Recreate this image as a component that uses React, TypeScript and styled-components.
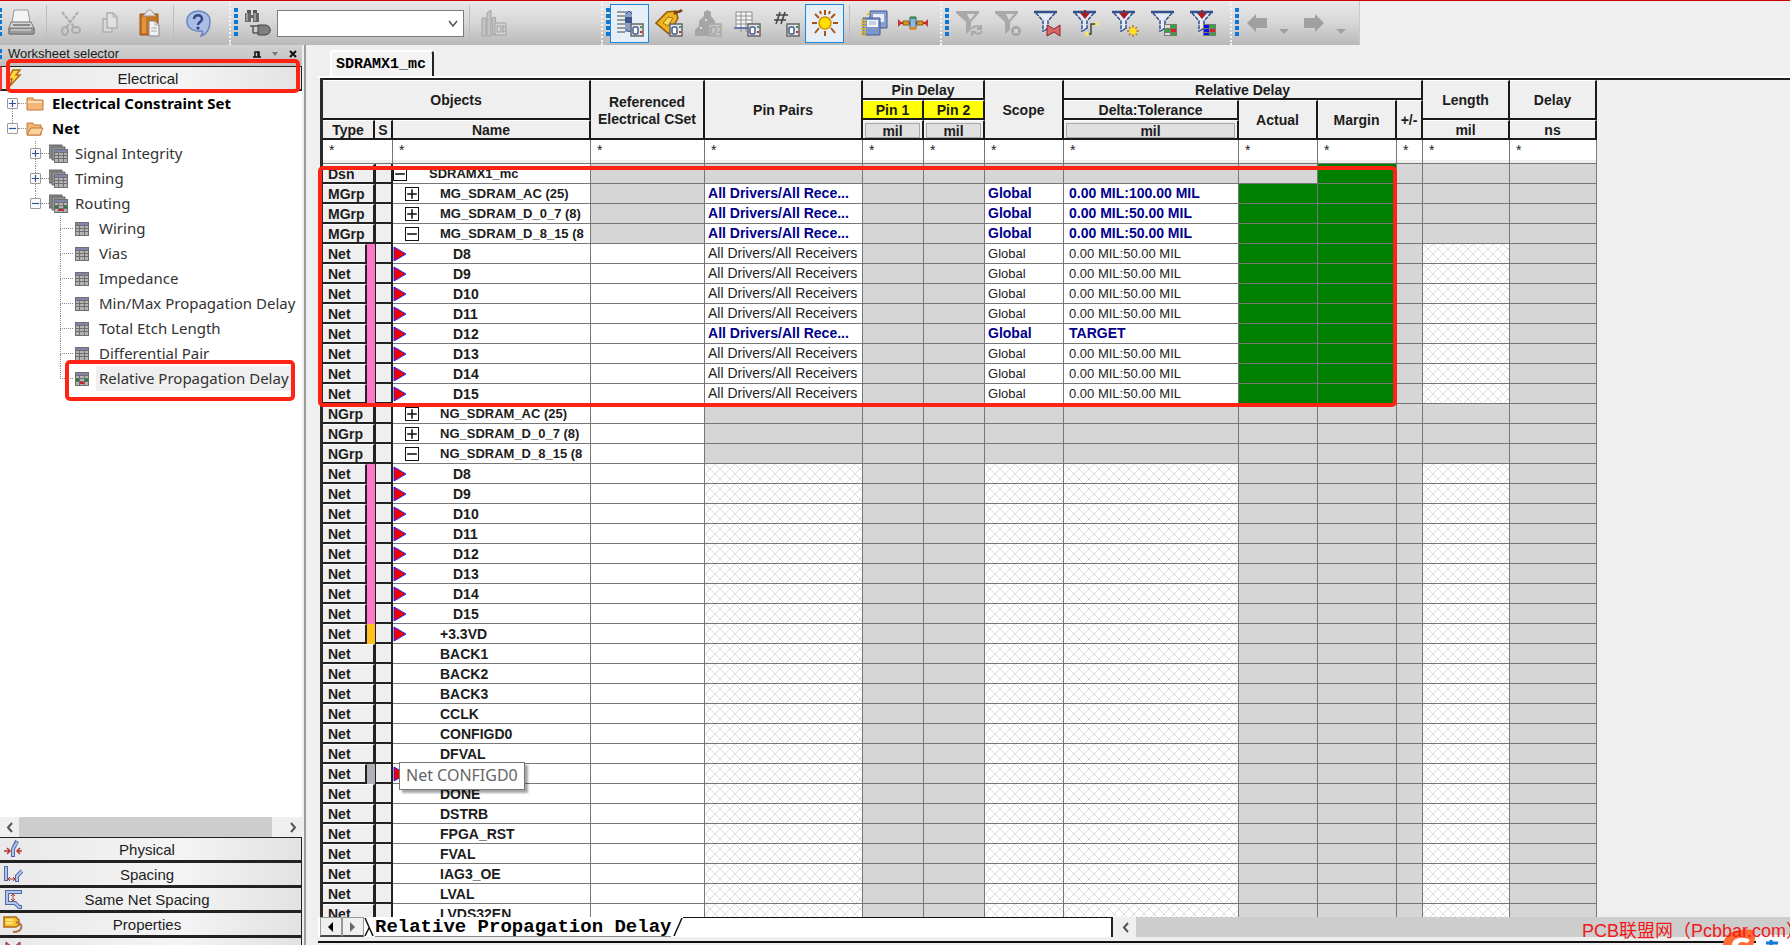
import React from "react";
import styled, { createGlobalStyle, css } from "styled-components";

const GlobalStyle = createGlobalStyle`
  *, *::before, *::after { box-sizing: border-box; }
  html, body, #root { height: 100%; }
  body {
    margin: 0;
    background: #efefef;
    color: #1c1c1c;
    font-family: "Liberation Sans", Arial, sans-serif;
    font-size: 14px;
    overflow: hidden;
  }
  button, input, select { font: inherit; color: inherit; margin: 0; padding: 0; border: 0; background: none; border-radius: 0; }
  svg { display: block; flex: none; }
`;

const Shell = styled.div`
  height: 100vh;
  display: flex;
  flex-direction: column;
  position: relative;
  overflow: hidden;
`;

/* ---------- toolbar ---------- */

const ToolbarRow = styled.header`
  flex: none;
  display: flex;
  height: 45px;
  border-top: 1px solid #c80000;
`;

const ToolGroup = styled.div<{ $width: number }>`
  flex: none;
  display: flex;
  align-items: center;
  width: ${(p) => p.$width}px;
  padding-left: 3px;
  background: linear-gradient(#e9e9e9, #d6d6d6 50%, #b9b9b9);
  border-left: 2px dotted #f4f4f4;
  &:first-child { padding-left: 0; border-left: 0; }
  &:last-child { border-right: 1px solid #c9c9c9; }
`;

const Grip = styled.span<{ $width?: number; $height?: number }>`
  flex: none;
  width: ${(p) => p.$width ?? 4}px;
  height: ${(p) => p.$height ?? 30}px;
  background: repeating-linear-gradient(#0a78d8 0 4px, transparent 4px 6px);
`;

const Separator = styled.span`
  flex: none;
  width: 10px;
  height: 36px;
  background: linear-gradient(#bdbdbd, #bdbdbd) center / 1px 100% no-repeat;
`;

const ToolButton = styled.button<{ $active?: boolean }>`
  flex: none;
  display: flex;
  align-items: center;
  justify-content: center;
  width: 39px;
  height: 39px;
  ${(p) => p.$active && css`
    background: #e6eef7;
    border: 1px solid #1a86dc;
  `}
`;

const HistoryButton = styled.button`
  flex: none;
  display: flex;
  align-items: center;
  justify-content: center;
  width: 57px;
  height: 39px;
`;

const ComboWrap = styled.label`
  flex: none;
  display: flex;
  align-items: center;
  position: relative;
  width: 187px;
  height: 27px;
  background: #fff;
  border: 1px solid #7c7c7c;
  svg { position: absolute; right: 5px; pointer-events: none; }
`;

const Combo = styled.select`
  width: 100%;
  height: 100%;
  appearance: none;
`;

/* ---------- left panel ---------- */

const Body = styled.div`
  flex: 1;
  min-height: 0;
  display: flex;
`;

const SidePanel = styled.aside`
  flex: none;
  display: flex;
  flex-direction: column;
  position: relative;
  width: 306px;
  padding-right: 2px;
  border-right: 2px solid #9b9b9b;
  background: #efefef;
`;

const PanelTitle = styled.div`
  flex: none;
  display: flex;
  align-items: center;
  height: 21px;
  padding-bottom: 4px;
  font-size: 13px;
  background: linear-gradient(#d2d2d2, #bfbfbf);
`;

const TitleText = styled.span`
  flex: 1;
  padding-left: 6px;
`;

const TitleButton = styled.button`
  display: flex;
  align-items: center;
  justify-content: center;
  width: 18px;
  height: 20px;
`;

const DomainButton = styled.button<{ $selected?: boolean }>`
  flex: none;
  display: flex;
  align-items: center;
  width: 100%;
  height: 25px;
  padding: 0 8px 0 3px;
  font-size: 15px;
  background: linear-gradient(90deg, #e9e9e9, #f4f4f4 60%, #e2e2e2);
  border: 1px solid #222;
  border-left: 0;
  border-bottom-width: 2px;
  ${(p) => p.$selected && css`border-left: 2px solid #f33;`}
`;

const DomainIcon = styled.span`
  width: 20px;
  flex: none;
`;

const DomainLabel = styled.span`
  flex: 1;
  padding-right: 22px;
  text-align: center;
`;

const Tree = styled.nav`
  flex: 1;
  min-height: 0;
  overflow: hidden;
  background: #fff;
`;

const TreeRow = styled.div<{ $indent: number }>`
  display: flex;
  align-items: center;
  height: 25px;
  padding-left: ${(p) => p.$indent}px;
`;

const ToggleColumn = styled.span`
  flex: none;
  display: flex;
  flex-direction: column;
  align-items: center;
  width: 11px;
  height: 25px;
`;

const VLine = styled.span<{ $on?: boolean }>`
  flex: 1;
  border-left: 1px dotted ${(p) => (p.$on ? "#8a8a8a" : "transparent")};
`;

const Toggle = styled.button`
  width: 11px;
  height: 11px;
  background: #fbfbfb;
  border: 1px solid #9a9a9a;
  border-radius: 1px;
`;

const HLine = styled.span`
  flex: none;
  width: 8px;
  border-top: 1px dotted #8a8a8a;
`;

const Branch = styled.span`
  flex: none;
  display: flex;
  flex-direction: column;
  width: 13px;
  height: 25px;
  margin-right: 2px;
`;

const BranchTop = styled.span`
  height: 13px;
  border-left: 1px dotted #8a8a8a;
  border-bottom: 1px dotted #8a8a8a;
`;

const TreeLabel = styled.a<{ $bold?: boolean; $current?: boolean }>`
  height: 25px;
  padding: 0 3px;
  line-height: 24px;
  font-family: "Noto Sans", "Open Sans", sans-serif;
  font-size: 15px;
  font-weight: ${(p) => (p.$bold ? 700 : 400)};
  color: ${(p) => (p.$bold ? "#000" : "#333")};
  background: ${(p) => (p.$current ? "#efefef" : "none")};
  text-decoration: none;
  white-space: nowrap;
`;

const TreeIcon = styled.span<{ $width: number; $gap: number }>`
  flex: none;
  width: ${(p) => p.$width}px;
  margin-right: ${(p) => p.$gap}px;
`;

const ScrollBar = styled.div`
  display: flex;
  align-items: center;
  background: #efefef;
`;

const PanelScroll = styled(ScrollBar)`
  flex: none;
  height: 20px;
`;

const ScrollArrow = styled.button<{ $width: number }>`
  flex: none;
  display: flex;
  align-items: center;
  justify-content: center;
  width: ${(p) => p.$width}px;
  height: 19px;
`;

const Thumb = styled.span`
  flex: 1;
  align-self: stretch;
  background: #cdcdcd;
`;

const ScrollRest = styled.span`
  flex: none;
  width: 11px;
`;

const DomainList = styled.div`
  flex: none;
  height: 108px;
  overflow: hidden;
`;

/* ---------- worksheet ---------- */

const Workspace = styled.main`
  flex: 1;
  min-width: 0;
  display: flex;
  flex-direction: column;
  padding-left: 12px;
`;

const FileTabs = styled.div`
  flex: none;
  display: flex;
  align-items: flex-end;
  height: 31px;
  padding-left: 12px;
`;

const FileTab = styled.button`
  width: 104px;
  height: 26px;
  padding-left: 4px;
  text-align: left;
  font-family: "Liberation Mono", monospace;
  font-size: 15px;
  font-weight: 700;
  color: #000;
  background: #f3f3f3;
  border: 2px solid #fff;
  border-bottom: 0;
  border-right: 2px solid #222;
  border-radius: 4px 4px 0 0;
`;

const SheetFrame = styled.section`
  flex: 1;
  min-height: 0;
  position: relative;
  padding-left: 2px;
  border-top: 2px solid #fff;
`;

const SheetView = styled.div`
  height: 100%;
  overflow: hidden;
  border-top: 2px solid #1f1f1f;
  border-left: 3px solid #2b2b2b;
`;

const Grid = styled.table`
  table-layout: fixed;
  width: 1274px;
  border-collapse: separate;
  border-spacing: 0;
  td, th { padding: 0; }
`;

const HeadCell = styled.th<{ $yellow?: boolean }>`
  height: 20px;
  overflow: hidden;
  && { padding-top: 2px; }
  font-weight: 700;
  line-height: 15px;
  &[rowspan="3"] { line-height: 17px; }
  text-align: center;
  white-space: pre;
  background: ${(p) => (p.$yellow ? "#ffff00" : "#efefef")};
  border-right: 2px solid #1a1a1a;
  border-bottom: 2px solid #1a1a1a;
  border-top: 1px solid #fff;
`;

const UnitButton = styled.button`
  display: block;
  width: calc(100% - 4px);
  height: 15px;
  margin: 0 auto;
  line-height: 15px;
  font-weight: 700;
  background: #e0e0e0;
  border: 1px solid #a8a8a8;
`;

const FilterCell = styled.td`
  height: 24px;
  vertical-align: top;
  background: linear-gradient(#fff 20px, #efefef 20px);
  border-right: 1px solid #777;
  border-bottom: 1px solid #777;
`;

const FilterInput = styled.input`
  display: block;
  width: 100%;
  height: 20px;
  padding-left: 6px;
`;

type Fill = "white" | "grey" | "green" | "hatch";

const fills = {
  white: css`background: #fff;`,
  grey: css`background: #d6d6d6;`,
  green: css`background: #008000;`,
  hatch: css`
    background-color: #fff;
    background-image:
      linear-gradient(45deg, transparent 46%, #dcdcdc 46%, #dcdcdc 54%, transparent 54%),
      linear-gradient(-45deg, transparent 46%, #dcdcdc 46%, #dcdcdc 54%, transparent 54%);
    background-size: 10px 10px;
  `,
};

const Cell = styled.td<{ $fill: Fill; $pad?: number; $bold?: boolean; $size?: number }>`
  height: 20px;
  overflow: hidden;
  && { padding-left: ${(p) => p.$pad ?? 3}px; }
  line-height: 19px;
  white-space: nowrap;
  font-size: ${(p) => (p.$bold ? 14 : p.$size ?? 13)}px;
  font-weight: ${(p) => (p.$bold ? 700 : 400)};
  color: ${(p) => (p.$bold ? "#00008c" : "#222")};
  border-right: 1px solid #777;
  border-bottom: 1px solid #777;
  ${(p) => fills[p.$fill]}
`;

const TypeCell = styled.td`
  height: 20px;
  background: #efefef;
`;

const TypeInner = styled.div`
  display: flex;
  height: 20px;
`;

const TypeName = styled.span`
  flex: 1;
  min-width: 0;
  padding-left: 5px;
  font-weight: 700;
  line-height: 18px;
  border-right: 2px solid #222;
  border-bottom: 2px solid #222;
  border-top: 1px solid #fff;
`;

const Strip = styled.span<{ $color: string }>`
  width: 8px;
  background: ${(p) => p.$color};
`;

const StatusCell = styled.td`
  height: 20px;
  background: #efefef;
  border: 0 solid #222;
  border-width: 0 2px 2px 1px;
`;

const NameCell = styled.td`
  height: 20px;
  background: #fff;
  border-right: 1px solid #777;
  border-bottom: 1px solid #777;
`;

const NameInner = styled.div<{ $size: number }>`
  display: flex;
  align-items: center;
  height: 19px;
  overflow: hidden;
  font-size: ${(p) => p.$size}px;
  font-weight: 700;
  white-space: nowrap;
`;

const MarkerSlot = styled.span<{ $width: number; $inset: number }>`
  flex: none;
  width: ${(p) => p.$width}px;
  padding-left: ${(p) => p.$inset}px;
`;

const Expander = styled.button`
  display: block;
  width: 14px;
  height: 14px;
  background: #fff;
  border: 1px solid #111;
`;

const Annotation = styled.div<{ $box: [number, number, number, number] }>`
  position: absolute;
  left: ${(p) => p.$box[0]}px;
  top: ${(p) => p.$box[1]}px;
  width: ${(p) => p.$box[2]}px;
  height: ${(p) => p.$box[3]}px;
  border: 4px solid #ff2314;
  border-radius: 5px;
  pointer-events: none;
`;

const Tooltip = styled.div`
  position: absolute;
  left: 81px;
  top: 684px;
  height: 28px;
  padding: 0 6px;
  line-height: 25px;
  font-family: "Noto Sans", "Open Sans", sans-serif;
  font-size: 16px;
  color: #666;
  background: #fff;
  border: 1px solid #767676;
  box-shadow: 3px 3px 2px rgba(0, 0, 0, 0.35);
  white-space: nowrap;
`;

const SheetTabs = styled.div`
  flex: none;
  display: flex;
  height: 20px;
`;

const TabStart = styled.div`
  flex: none;
  display: flex;
  background: #fff;
  padding-left: 2px;
`;

const StepButton = styled.button`
  display: flex;
  align-items: center;
  justify-content: center;
  width: 22px;
  height: 20px;
  background: #efefef;
  border: 1px solid #9a9a9a;
  border-bottom: 2px solid #444;
`;

const SheetTab = styled.button`
  height: 20px;
  line-height: 20px;
  font-family: "Liberation Mono", monospace;
  font-size: 19px;
  font-weight: 700;
  color: #000;
  background: #fff;
  border-bottom: 1px solid #888;
`;

const TabRest = styled.span`
  flex: none;
  width: 430px;
  background: #fff;
  border-top: 1px solid #111;
  border-right: 2px solid #222;
`;

const SheetScroll = styled(ScrollBar)`
  flex: 1;
  margin-left: 3px;
`;

const Footer = styled.div`
  flex: none;
  height: 8px;
  padding-top: 4px;
  &::after {
    content: "";
    display: block;
    height: 2px;
    background: #111;
  }
`;

const Watermark = styled.div`
  position: absolute;
  right: 0;
  bottom: 0;
  width: 210px;
  height: 27px;
  padding-left: 2px;
  line-height: 26px;
  font-family: "Liberation Sans", "Noto Sans CJK SC", sans-serif;
  font-size: 18px;
  color: #f01818;
  white-space: nowrap;
`;

const Badge = styled.div`
  position: absolute;
  right: 0;
  bottom: 0;
`;

/* ---------- icons ---------- */

const Ico = ({ children, size = 28 }: { children: React.ReactNode; size?: number }) => (
  <svg width={size} height={size} viewBox={`0 0 ${size} ${size}`} aria-hidden="true">{children}</svg>
);

const PrintIcon = () => (
  <Ico>
    <path d="M6 1h14l2 13H4z" fill="#f4f4f4" stroke="#9a9a9a" />
    <path d="M3 13h20l3 6v6H1v-6z" fill="#d5d5d5" stroke="#777" />
    <path d="M1 19h25v6H1z" fill="#9b9b9b" stroke="#777" />
    <path d="M5 16h17" stroke="#888" strokeWidth="2" />
    <path d="M3 21h20" stroke="#ddd" />
  </Ico>
);
const CutIcon = () => (
  <Ico>
    <g fill="none" stroke="#ababab">
      <path d="M5 3l13 16M21 3L9 19" strokeWidth="2" strokeDasharray="4 1" />
      <ellipse cx="8" cy="22" rx="3" ry="4" strokeWidth="2" />
      <ellipse cx="19" cy="21" rx="4" ry="3" strokeWidth="2" />
    </g>
  </Ico>
);
const CopyIcon = () => (
  <Ico>
    <path d="M7 10h9v13H7z" fill="#dadada" stroke="#b0b0b0" strokeWidth="1.5" />
    <path d="M11 4h6l4 4v11H11z" fill="#e0e0e0" stroke="#b0b0b0" strokeWidth="1.5" />
    <path d="M17 4v4h4" fill="none" stroke="#aaa" />
  </Ico>
);
const PasteIcon = () => (
  <Ico>
    <path d="M5 5h18v21H5z" fill="#c9731f" stroke="#9a5312" />
    <path d="M7 8h4v16H7z" fill="#dd9448" />
    <path d="M8 7l3-3c1-4 6-4 7 0l3 3z" fill="#e6e6e6" stroke="#999" />
    <path d="M14 12h6l4 4v11H14z" fill="#f2f2f2" stroke="#888" />
    <path d="M20 12v4h4M16 19h6M16 22h6" fill="none" stroke="#aaa" />
  </Ico>
);
const HelpIcon = () => (
  <Ico>
    <path d="M14 2c7 0 12 4 12 10 0 7-3 13-9 15 2-3 2-4 1-5-9 1-15-3-15-10C3 6 8 2 14 2z" fill="#a9bde6" stroke="#6a84bd" strokeWidth="1.5" />
    <path d="M10 10c0-5 8-5 8 0 0 3-4 3-4 6" fill="none" stroke="#30477f" strokeWidth="2.5" />
    <circle cx="14" cy="19" r="1.6" fill="#30477f" />
  </Ico>
);
const FindIcon = () => (
  <Ico>
    <path d="M3 1h4v4H3zM9 1h4v4H9z" fill="#555" />
    <path d="M1 4h6v9H1zM9 4h6v9H9zM7 6h2v3H7z" fill="#666" />
    <path d="M3 4v8M11 4v8" stroke="#ccc" />
    <path d="M6 17h9M9 17v7M9 24h6" stroke="#555" strokeWidth="1.5" fill="none" />
    <path d="M14 16h7c7 0 7 10 0 10h-7z" fill="#7e7e7e" stroke="#444" />
  </Ico>
);
const LibraryIcon = () => (
  <Ico>
    <g fill="#c4c4c4" stroke="#a5a5a5">
      <path d="M2 9h4v18H2zM7 4l4-3v26H7z" />
      <path d="M12 9l3-1 3 18h-5z" />
      <path d="M15 14h11v12H15z" fill="#d2d2d2" />
      <path d="M17 17h4v6h-4zM23 16v8M22 18h4M22 22h4" fill="none" />
    </g>
  </Ico>
);
const Panel = ({ muted }: { muted?: boolean }) => (
  <g>
    <path d="M15 15h12v12H15z" fill={muted ? "#c4c4c4" : "#e4e6e8"} stroke={muted ? "#a9a9a9" : "#666"} strokeWidth="1.5" />
    <rect x="17" y="18" width="5" height="7" rx="1.5" fill={muted ? "#c4c4c4" : "#fff"} stroke={muted ? "#a5a5a5" : "#3f5b92"} strokeWidth="1.5" />
    <path d="M24 18h2" stroke={muted ? "#aaa" : "#3a9a4a"} strokeWidth="2" />
    <path d="M24 23h2" stroke={muted ? "#aaa" : "#c83030"} strokeWidth="2" />
  </g>
);
const SheetPanelIcon = () => (
  <Ico>
    <path d="M1 3h8M1 7h8M1 11h8M1 15h8M1 19h8M1 23h8" stroke="#9a9a9a" strokeWidth="2" />
    <path d="M9 2h7v21H9z" fill="#8ba0c8" />
    <path d="M9 8h7v6H9z" fill="#3f5688" />
    <path d="M10 5l3-3 3 3M10 20l3 3 3-3" stroke="#3f5688" fill="none" />
    <Panel />
  </Ico>
);
const TagPanelIcon = () => (
  <Ico>
    <path d="M1 14L12 3l9-1 2 7-9 16z" fill="#efb21f" stroke="#8f5a0a" strokeWidth="1.5" />
    <path d="M8 14l5-6 5 1-5 8z" fill="#f9d457" stroke="#a96c10" />
    <path d="M19 5c2-3 5-1 8-4" stroke="#7c4310" strokeWidth="2.5" fill="none" />
    <Panel />
  </Ico>
);
const ShapePanelIcon = () => (
  <Ico>
    <path d="M1 27v-6l4-4v-5l5-5V3l3-2 4 2v4l4 5v15z" fill="#a5a5a5" />
    <path d="M12 10v2M7 18v2" stroke="#ddd" strokeWidth="2" />
    <Panel muted />
  </Ico>
);
const GridPanelIcon = () => (
  <Ico>
    <path d="M3 3h16v16H3zM3 7h16M3 11h16M3 15h16M8 3v20M13 3v20" fill="#f4f4f4" stroke="#8f8f8f" />
    <path d="M1 19h20" stroke="#4a66a5" strokeWidth="1.5" />
    <Panel />
  </Ico>
);
const HashPanelIcon = () => (
  <Ico>
    <path d="M8 3L4 15M13 3L9 15M4 6h12M2 11h12" stroke="#444" strokeWidth="1.5" fill="none" />
    <Panel />
  </Ico>
);
const SunIcon = () => (
  <Ico>
    <path d="M14 1v5M14 22v5M1 14h5M22 14h5M4 5l4 4M24 5l-4 4M4 24l4-5M24 24l-4-5M9 2l1 3M19 2l-1 3" stroke="#a85410" strokeWidth="2" />
    <circle cx="14" cy="14" r="6" fill="#ffe000" stroke="#d89000" strokeWidth="1.5" />
  </Ico>
);
const WindowsIcon = () => (
  <Ico>
    <path d="M10 2h17v17H10z" fill="#8aa0d2" stroke="#40598f" />
    <path d="M13 5h11v8H13z" fill="#e9eef8" />
    <path d="M3 9h17v17H3z" fill="#7e96cb" stroke="#40598f" />
    <path d="M7 11h11v7H7z" fill="#f2f5fb" />
    <path d="M9 13h7M9 15h7" stroke="#9aa9cc" />
    <path d="M1 11h5M1 14h5M1 17h5M1 20h5M1 23h5M1 26h5M7 6l3-3" stroke="#e8c020" strokeWidth="1.5" />
  </Ico>
);
const ConnectorIcon = () => (
  <svg width="32" height="28" viewBox="0 0 32 28" aria-hidden="true">
    <path d="M1 14h30" stroke="#a02020" strokeWidth="2" />
    <path d="M1 10v8l4-4zM31 10v8l-4-4z" fill="#d03030" />
    <path d="M6 12h6v4H6zM20 12h6v4h-6z" fill="#d79a28" stroke="#8a5a10" />
    <path d="M13 8h6v12h-6z" fill="#8fb8dc" stroke="#2f5f8f" />
    <path d="M13 8h6v2h-6z" fill="#2f9a3f" />
    <path d="M13 18h6v3h-6z" fill="#e08a20" />
  </svg>
);

const Funnel = ({ muted, filled, children }: { muted?: boolean; filled?: boolean; children?: React.ReactNode }) => (
  <Ico>
    {muted ? (
      <g>
        <path d="M1 2h23v2l-8 9v8l-5 4V13L1 4z" fill="#a9a9a9" />
        <path d="M12 5h8l-5 6z" fill="#dcdcdc" />
      </g>
    ) : (
      <g>
        <path d="M2 3h21l-8 9v9l-5 3V12z" fill="#e6ebf3" />
        <path d="M1 3h23" stroke="#32508c" strokeWidth="2.5" />
        <path d="M3 4l7 8v11M22 4l-7 8v8M11 22l4-3" fill="none" stroke="#32508c" strokeWidth="1.5" strokeDasharray="4 1" />
        {filled && <path d="M12 1h2v3h4l-5 6-5-6h4z" fill="#a81c24" />}
      </g>
    )}
    {children}
  </Ico>
);
const RefreshBadge = () => (
  <path d="M17 20c1-3 6-4 8-1M26 16v4h-4M27 22c-1 3-6 4-8 1M17 27v-4h4" fill="none" stroke="#a9a9a9" strokeWidth="2" />
);
const CloseBadge = () => (
  <g>
    <circle cx="22" cy="22" r="5" fill="#a5a5a5" />
    <path d="M20 20l4 4M24 20l-4 4" stroke="#e0e0e0" strokeWidth="1.5" />
  </g>
);
const BowtieBadge = () => <path d="M14 16l7 4 6-4v11l-6-4-7 4z" fill="#d86868" stroke="#902028" />;
const StepBadge = () => (
  <g>
    <path d="M15 25h4V15h5" fill="none" stroke="#444" strokeWidth="1.5" />
    <circle cx="15" cy="25" r="2" fill="#f5ea60" />
    <circle cx="25" cy="15" r="2" fill="#f5ea60" />
  </g>
);
const SparkBadge = () => (
  <g>
    <path d="M22 16v12M16 22h12M18 18l8 8M26 18l-8 8" stroke="#b87820" strokeWidth="1.5" />
    <circle cx="22" cy="22" r="3.5" fill="#ffe020" />
  </g>
);
const TableBadge = ({ blue }: { blue?: boolean }) => (
  <g>
    <path d="M14 15h13v12H14z" fill="#777" />
    <path d="M15 16h5v3h-5zM15 24h5v2h-5z" fill={blue ? "#1010e8" : "#ddd"} />
    <path d="M15 20h5v3h-5z" fill={blue ? "#1010e8" : "#30a838"} />
    <path d="M21 16h5v3h-5zM21 24h5v2h-5z" fill="#30a838" />
    <path d="M21 20h5v3h-5z" fill="#e02020" />
  </g>
);

const ArrowIcon = ({ flip }: { flip?: boolean }) => (
  <svg width="20" height="18" viewBox="0 0 20 18" aria-hidden="true">
    <path d={flip ? "M20 9L11 0v4H0v10h11v4z" : "M0 9l9-9v4h11v10H9v4z"} fill="#a0a0a0" />
  </svg>
);
const DropIcon = () => (
  <svg width="22" height="24" viewBox="0 0 22 24" aria-hidden="true">
    <path d="M12 18h10l-5 5z" fill="#a0a0a0" />
  </svg>
);

const Chevron = ({ dir }: { dir: "left" | "right" | "down" }) => (
  <svg width="10" height="11" viewBox="0 0 10 11" aria-hidden="true">
    <path
      d={dir === "left" ? "M7 1L3 5.5 7 10" : dir === "right" ? "M3 1l4 4.5L3 10" : "M1 3l4 5 4-5"}
      fill="none" stroke="#555" strokeWidth={dir === "down" ? 1.5 : 2}
    />
  </svg>
);

const BoltIcon = () => (
  <svg width="18" height="20" viewBox="0 0 18 20" aria-hidden="true">
    <path d="M8 2h7l-4 5h4L5 18l2-7H3z" fill="#ffd83a" stroke="#b4691a" strokeWidth="1.5" />
  </svg>
);
const PhysicalIcon = () => (
  <svg width="20" height="20" viewBox="0 0 20 20" aria-hidden="true">
    <path d="M10 18v-8l4-8" stroke="#4d6aa5" strokeWidth="4" fill="none" />
    <path d="M10 17v-7l4-7" stroke="#b3c5e8" strokeWidth="2" fill="none" />
    <path d="M1 12h6M4 9l3 3-3 3M19 12h-5M17 9l-3 3 3 3" stroke="#b33" strokeWidth="1.5" fill="none" />
  </svg>
);
const SpacingIcon = () => (
  <svg width="20" height="20" viewBox="0 0 20 20" aria-hidden="true">
    <path d="M3 2v15M14 18v-6l5-5" stroke="#4d6aa5" strokeWidth="4" fill="none" />
    <path d="M3 3v13M14 17v-5l5-5" stroke="#b3c5e8" strokeWidth="2" fill="none" />
    <path d="M5 15h7M7 13l-2 2 2 2M10 13l2 2-2 2" stroke="#b33" strokeWidth="1" fill="none" />
  </svg>
);
const SameNetIcon = () => (
  <svg width="20" height="20" viewBox="0 0 20 20" aria-hidden="true">
    <path d="M19 3H4v11h8l4 4h3" stroke="#4d6aa5" strokeWidth="4" fill="none" />
    <path d="M18 3H4v11h8l4 4h2" stroke="#b3c5e8" strokeWidth="2" fill="none" />
    <path d="M10 6v6M8 7l2-2 2 2M8 10l2 2 2-2" stroke="#b33" strokeWidth="1" fill="none" />
  </svg>
);
const PropertiesIcon = () => (
  <svg width="20" height="20" viewBox="0 0 20 20" aria-hidden="true">
    <path d="M1 3h12l3 3v5l-3 2H1z" fill="#f6c02e" stroke="#b06a1c" strokeWidth="1.5" />
    <path d="M3 6h7M3 9h7" stroke="#fff0a0" strokeWidth="1.5" />
    <path d="M13 8c8 2 7 10-3 10" fill="none" stroke="#a8763c" strokeWidth="2" />
  </svg>
);
const DrcIcon = () => (
  <svg width="20" height="20" viewBox="0 0 20 20" aria-hidden="true">
    <path d="M3 3l7 6 7-6v14l-7-6-7 6z" fill="#d86868" stroke="#902028" />
  </svg>
);

const FolderIcon = ({ open }: { open?: boolean }) => (
  <svg width="18" height="15" viewBox="0 0 18 15" aria-hidden="true">
    <path d={open ? "M1 14V2h6l1 2h7v10z" : "M1 14V2h6l1 2h9v10z"} fill="#f3b676" stroke="#c07838" />
    {open
      ? <path d="M1 14l4-7h12l-3 7z" fill="#fbd3a0" stroke="#c07838" />
      : <path d="M2 6h14" stroke="#fbdcb4" strokeWidth="2" />}
  </svg>
);
const TableGlyph = ({ x = 0, y = 0, marked }: { x?: number; y?: number; marked?: boolean }) => (
  <g transform={`translate(${x} ${y})`}>
    <path d="M0 0h14v14H0z" fill="#6f6f6f" />
    <path d="M1 1h12v2H1z" fill="#8087ad" />
    <path d="M1 4h3v2H1zM5 4h4v2H5zM10 4h3v2h-3zM1 7h3v2H1zM5 7h4v2H5zM10 7h3v2h-3zM1 10h3v3H1zM5 10h4v3H5zM10 10h3v3h-3z" fill="#b4b4b4" />
    {marked && (
      <g>
        <path d="M1 7h3v2H1zM10 7h3v2h-3z" fill="#2c7a38" />
        <path d="M5 10h4v2H5z" fill="#d82020" />
      </g>
    )}
  </g>
);
const StackIcon = ({ marked }: { marked?: boolean }) => (
  <svg width="20" height="20" viewBox="0 0 20 20" aria-hidden="true">
    <path d="M0 1h13v13H0z" fill="#8a8a8a" stroke="#666" />
    <path d="M3 3h13v13H3z" fill="#959595" stroke="#666" />
    <TableGlyph x={5} y={5} marked={marked} />
  </svg>
);
const SheetIcon = ({ marked }: { marked?: boolean }) => (
  <svg width="14" height="14" viewBox="0 0 14 14" aria-hidden="true"><TableGlyph marked={marked} /></svg>
);
const SignIcon = ({ plus, size, color }: { plus?: boolean; size: number; color: string }) => (
  <svg width={size} height={size} viewBox="0 0 10 10" aria-hidden="true">
    <path d={plus ? "M1 5h8M5 1v8" : "M1 5h8"} stroke={color} strokeWidth="1.3" />
  </svg>
);
const FlagIcon = () => (
  <svg width="14" height="16" viewBox="0 0 14 16" aria-hidden="true">
    <path d="M1 1v14l12-7z" fill="#f00000" stroke="#2020ff" />
  </svg>
);

/* ---------- data ---------- */

type Kind = "Dsn" | "MGrp" | "NGrp" | "Net";
interface Row {
  kind: Kind;
  name: string;
  open?: boolean;
  deep?: boolean;
  strip?: string;
  flag?: boolean;
  delta?: string;
  bold?: boolean;
}

const PINK = "#ff77c8";
const bits = ["D8", "D9", "D10", "D11", "D12", "D13", "D14", "D15"];

const rows: Row[] = [
  { kind: "Dsn", name: "SDRAMX1_mc", open: true },
  { kind: "MGrp", name: "MG_SDRAM_AC (25)", delta: "0.00 MIL:100.00 MIL", bold: true },
  { kind: "MGrp", name: "MG_SDRAM_D_0_7 (8)", delta: "0.00 MIL:50.00 MIL", bold: true },
  { kind: "MGrp", name: "MG_SDRAM_D_8_15 (8", open: true, delta: "0.00 MIL:50.00 MIL", bold: true },
  ...bits.map((name): Row => ({
    kind: "Net", name, deep: true, strip: PINK, flag: true,
    delta: name === "D12" ? "TARGET" : "0.00 MIL:50.00 MIL", bold: name === "D12",
  })),
  { kind: "NGrp", name: "NG_SDRAM_AC (25)" },
  { kind: "NGrp", name: "NG_SDRAM_D_0_7 (8)" },
  { kind: "NGrp", name: "NG_SDRAM_D_8_15 (8", open: true },
  ...bits.map((name): Row => ({ kind: "Net", name, deep: true, strip: PINK, flag: true })),
  { kind: "Net", name: "+3.3VD", strip: "#ffc020", flag: true },
  ...["BACK1", "BACK2", "BACK3", "CCLK", "CONFIGD0", "DFVAL"].map((name): Row => ({ kind: "Net", name })),
  { kind: "Net", name: "", strip: "#b0b0b6", flag: true },
  ...["DONE", "DSTRB", "FPGA_RST", "FVAL", "IAG3_OE", "LVAL", "LVDS32EN"].map((name): Row => ({ kind: "Net", name })),
];

const columns = [52, 18, 198, 114, 158, 61, 61, 79, 175, 79, 79, 26, 87, 87];
const filterNames = ["Referenced Electrical CSet", "Pin Pairs", "Pin 1", "Pin 2", "Scope", "Delta:Tolerance", "Actual", "Margin", "+/-", "Length", "Delay"];

const GridRow = ({ row }: { row: Row }) => {
  const isNet = row.kind === "Net";
  const valued = !!row.delta;
  const value: Fill = valued ? "white" : isNet ? "hatch" : "grey";
  const slot = row.kind === "Dsn" ? 36 : row.deep ? 60 : 47;
  const inset = isNet || row.kind === "Dsn" ? 0 : 12;
  return (
    <tr>
      <TypeCell>
        <TypeInner>
          <TypeName>{row.kind}</TypeName>
          {row.strip && <Strip $color={row.strip} />}
        </TypeInner>
      </TypeCell>
      <StatusCell />
      <NameCell>
        <NameInner $size={isNet ? 14 : 13}>
          <MarkerSlot $width={slot} $inset={inset}>
            {row.flag && <FlagIcon />}
            {!isNet && (
              <Expander aria-label={row.open ? "Collapse" : "Expand"}>
                <SignIcon plus={!row.open} size={12} color="#111" />
              </Expander>
            )}
          </MarkerSlot>
          {row.name}
        </NameInner>
      </NameCell>
      <Cell $fill={row.kind === "Dsn" || row.kind === "MGrp" ? "grey" : "white"} />
      <Cell $fill={value} $bold={row.bold} $size={14}>
        {valued && (row.bold ? "All Drivers/All Rece..." : "All Drivers/All Receivers")}
      </Cell>
      <Cell $fill="grey" />
      <Cell $fill="grey" />
      <Cell $fill={value} $bold={row.bold}>{valued && "Global"}</Cell>
      <Cell $fill={value} $bold={row.bold} $pad={5}>{row.delta}</Cell>
      <Cell $fill={valued ? "green" : "grey"} />
      <Cell $fill={valued || row.kind === "Dsn" ? "green" : "grey"} />
      <Cell $fill="grey" />
      <Cell $fill={isNet ? "hatch" : "grey"} />
      <Cell $fill="grey" />
    </tr>
  );
};

const sheets = ["Wiring", "Vias", "Impedance", "Min/Max Propagation Delay", "Total Etch Length", "Differential Pair", "Relative Propagation Delay"];
const groups = ["Signal Integrity", "Timing", "Routing"];

const SideTree = () => (
  <Tree aria-label="Worksheets">
    <TreeRow $indent={7}>
      <ToggleColumn><VLine /><Toggle aria-label="Expand"><SignIcon plus size={9} color="#3050a0" /></Toggle><VLine $on /></ToggleColumn>
      <HLine />
      <TreeIcon $width={18} $gap={5}><FolderIcon /></TreeIcon>
      <TreeLabel href="#" $bold>Electrical Constraint Set</TreeLabel>
    </TreeRow>
    <TreeRow $indent={7}>
      <ToggleColumn><VLine $on /><Toggle aria-label="Collapse"><SignIcon size={9} color="#3050a0" /></Toggle><VLine /></ToggleColumn>
      <HLine />
      <TreeIcon $width={18} $gap={5}><FolderIcon open /></TreeIcon>
      <TreeLabel href="#" $bold>Net</TreeLabel>
    </TreeRow>
    {groups.map((g) => (
      <TreeRow key={g} $indent={30}>
        <ToggleColumn>
          <VLine $on />
          <Toggle aria-label={g === "Routing" ? "Collapse" : "Expand"}><SignIcon plus={g !== "Routing"} size={9} color="#3050a0" /></Toggle>
          <VLine $on={g !== "Routing"} />
        </ToggleColumn>
        <HLine />
        <TreeIcon $width={19} $gap={4}><StackIcon marked={g === "Routing"} /></TreeIcon>
        <TreeLabel href="#">{g}</TreeLabel>
      </TreeRow>
    ))}
    {sheets.map((s, i) => {
      const last = i === sheets.length - 1;
      return (
        <TreeRow key={s} $indent={60}>
          <Branch><BranchTop /><VLine $on={!last} /></Branch>
          <TreeIcon $width={14} $gap={7}><SheetIcon marked={last} /></TreeIcon>
          <TreeLabel href="#" $current={last}>{s}</TreeLabel>
        </TreeRow>
      );
    })}
  </Tree>
);

const domains: [string, React.ReactNode][] = [
  ["Physical", <PhysicalIcon />],
  ["Spacing", <SpacingIcon />],
  ["Same Net Spacing", <SameNetIcon />],
  ["Properties", <PropertiesIcon />],
  ["DRC", <DrcIcon />],
];

export default function App() {
  return (
    <Shell>
      <GlobalStyle />
      <ToolbarRow role="toolbar">
        <ToolGroup $width={229}>
          <Grip $width={2} />
          <ToolButton aria-label="Print"><PrintIcon /></ToolButton>
          <Separator />
          <ToolButton aria-label="Cut"><CutIcon /></ToolButton>
          <ToolButton aria-label="Copy"><CopyIcon /></ToolButton>
          <ToolButton aria-label="Paste"><PasteIcon /></ToolButton>
          <Separator />
          <ToolButton aria-label="Help"><HelpIcon /></ToolButton>
        </ToolGroup>
        <ToolGroup $width={372}>
          <Grip />
          <ToolButton aria-label="Find"><FindIcon /></ToolButton>
          <ComboWrap>
            <Combo aria-label="Search" />
            <Chevron dir="down" />
          </ComboWrap>
          <Separator />
          <ToolButton aria-label="Library"><LibraryIcon /></ToolButton>
        </ToolGroup>
        <ToolGroup $width={339}>
          <Grip />
          <ToolButton $active aria-label="Worksheet selector"><SheetPanelIcon /></ToolButton>
          <ToolButton aria-label="Constraints"><TagPanelIcon /></ToolButton>
          <ToolButton aria-label="Shapes"><ShapePanelIcon /></ToolButton>
          <ToolButton aria-label="Grid"><GridPanelIcon /></ToolButton>
          <ToolButton aria-label="Units"><HashPanelIcon /></ToolButton>
          <ToolButton $active aria-label="Highlight"><SunIcon /></ToolButton>
          <Separator />
          <ToolButton aria-label="Windows"><WindowsIcon /></ToolButton>
          <ToolButton aria-label="Topology"><ConnectorIcon /></ToolButton>
        </ToolGroup>
        <ToolGroup $width={290}>
          <Grip />
          <ToolButton aria-label="Refresh filter"><Funnel muted><RefreshBadge /></Funnel></ToolButton>
          <ToolButton aria-label="Clear filter"><Funnel muted><CloseBadge /></Funnel></ToolButton>
          <ToolButton aria-label="Filter violations"><Funnel><BowtieBadge /></Funnel></ToolButton>
          <ToolButton aria-label="Filter nets"><Funnel filled><StepBadge /></Funnel></ToolButton>
          <ToolButton aria-label="Filter highlighted"><Funnel filled><SparkBadge /></Funnel></ToolButton>
          <ToolButton aria-label="Filter results"><Funnel><TableBadge /></Funnel></ToolButton>
          <ToolButton aria-label="Filter rows"><Funnel filled><TableBadge blue /></Funnel></ToolButton>
        </ToolGroup>
        <ToolGroup $width={130}>
          <Grip />
          <HistoryButton aria-label="Back"><ArrowIcon /><DropIcon /></HistoryButton>
          <HistoryButton aria-label="Forward"><ArrowIcon flip /><DropIcon /></HistoryButton>
        </ToolGroup>
      </ToolbarRow>

      <Body>
        <SidePanel>
          <PanelTitle>
            <Grip $width={2} $height={10} />
            <TitleText>Worksheet selector</TitleText>
            <TitleButton aria-label="Pin">
              <svg width="8" height="10" viewBox="0 0 8 10" aria-hidden="true"><path d="M2 8V3h4v5M0 8h8M5 3v5" stroke="#111" strokeWidth="1.5" fill="none" /></svg>
            </TitleButton>
            <TitleButton aria-label="Menu">
              <svg width="8" height="6" viewBox="0 0 8 6" aria-hidden="true"><path d="M1 1h6L4 5z" fill="#777" /></svg>
            </TitleButton>
            <TitleButton aria-label="Close">
              <svg width="8" height="8" viewBox="0 0 8 8" aria-hidden="true"><path d="M1 1l6 6M7 1L1 7" stroke="#111" strokeWidth="2" /></svg>
            </TitleButton>
          </PanelTitle>
          <DomainButton $selected>
            <DomainIcon><BoltIcon /></DomainIcon>
            <DomainLabel>Electrical</DomainLabel>
          </DomainButton>
          <SideTree />
          <PanelScroll>
            <ScrollArrow $width={19} aria-label="Scroll left"><Chevron dir="left" /></ScrollArrow>
            <Thumb />
            <ScrollRest />
            <ScrollArrow $width={19} aria-label="Scroll right"><Chevron dir="right" /></ScrollArrow>
          </PanelScroll>
          <DomainList>
            {domains.map(([label, icon]) => (
              <DomainButton key={label}>
                <DomainIcon>{icon}</DomainIcon>
                <DomainLabel>{label}</DomainLabel>
              </DomainButton>
            ))}
          </DomainList>
          <Annotation $box={[6, 14, 294, 34]} />
          <Annotation $box={[65, 315, 230, 41]} />
        </SidePanel>

        <Workspace>
          <FileTabs><FileTab>SDRAMX1_mc</FileTab></FileTabs>
          <SheetFrame>
            <SheetView>
              <Grid>
                <colgroup>{columns.map((w, i) => <col key={i} style={{ width: w }} />)}</colgroup>
                <thead>
                  <tr>
                    <HeadCell colSpan={3} rowSpan={2}>Objects</HeadCell>
                    <HeadCell rowSpan={3}>{"Referenced\nElectrical CSet"}</HeadCell>
                    <HeadCell rowSpan={3}>Pin Pairs</HeadCell>
                    <HeadCell colSpan={2}>Pin Delay</HeadCell>
                    <HeadCell rowSpan={3}>Scope</HeadCell>
                    <HeadCell colSpan={4}>Relative Delay</HeadCell>
                    <HeadCell rowSpan={2}>Length</HeadCell>
                    <HeadCell rowSpan={2}>Delay</HeadCell>
                  </tr>
                  <tr>
                    <HeadCell $yellow>Pin 1</HeadCell>
                    <HeadCell $yellow>Pin 2</HeadCell>
                    <HeadCell>Delta:Tolerance</HeadCell>
                    <HeadCell rowSpan={2}>Actual</HeadCell>
                    <HeadCell rowSpan={2}>Margin</HeadCell>
                    <HeadCell rowSpan={2}>+/-</HeadCell>
                  </tr>
                  <tr>
                    <HeadCell>Type</HeadCell>
                    <HeadCell>S</HeadCell>
                    <HeadCell>Name</HeadCell>
                    <HeadCell><UnitButton>mil</UnitButton></HeadCell>
                    <HeadCell><UnitButton>mil</UnitButton></HeadCell>
                    <HeadCell><UnitButton>mil</UnitButton></HeadCell>
                    <HeadCell>mil</HeadCell>
                    <HeadCell>ns</HeadCell>
                  </tr>
                </thead>
                <tbody>
                  <tr>
                    <FilterCell colSpan={2}><FilterInput aria-label="Filter Type" defaultValue="*" /></FilterCell>
                    <FilterCell><FilterInput aria-label="Filter Name" defaultValue="*" /></FilterCell>
                    {filterNames.map((n) => (
                      <FilterCell key={n}><FilterInput aria-label={`Filter ${n}`} defaultValue="*" /></FilterCell>
                    ))}
                  </tr>
                  {rows.map((row, i) => <GridRow key={i} row={row} />)}
                </tbody>
              </Grid>
            </SheetView>
            <Annotation $box={[0, 88, 1079, 241]} />
            <Tooltip role="tooltip">Net CONFIGD0</Tooltip>
          </SheetFrame>
          <SheetTabs>
            <TabStart>
              <StepButton aria-label="Previous sheet">
                <svg width="8" height="10" viewBox="0 0 8 10" aria-hidden="true"><path d="M6 0v10L1 5z" fill="#000" /></svg>
              </StepButton>
              <StepButton aria-label="Next sheet">
                <svg width="8" height="10" viewBox="0 0 8 10" aria-hidden="true"><path d="M1 0v10l5-5z" fill="#666" /></svg>
              </StepButton>
              <svg width="11" height="20" viewBox="0 0 11 20" aria-hidden="true"><path d="M1 1l8 18M1 19l4-8" stroke="#111" strokeWidth="1.5" fill="none" /></svg>
              <SheetTab>Relative Propagation Delay</SheetTab>
              <svg width="12" height="20" viewBox="0 0 12 20" aria-hidden="true"><path d="M3 19l8-18" stroke="#111" strokeWidth="1.5" fill="none" /></svg>
            </TabStart>
            <TabRest />
            <SheetScroll>
              <ScrollArrow $width={20} aria-label="Scroll left"><Chevron dir="left" /></ScrollArrow>
              <Thumb />
            </SheetScroll>
          </SheetTabs>
          <Footer />
        </Workspace>
      </Body>

      <Badge>
        <svg width="70" height="18" viewBox="0 0 70 18" aria-hidden="true">
          <path d="M36 8h34v10H36z" fill="#fafcff" />
          <path d="M3 18C4 6 16 1 33 3l2 9-2 6z" fill="#ff6a35" />
          <path d="M12 18c0-8 12-9 18-5l-3 3c-5-2-9-1-9 2z" fill="#fff" />
          <path d="M46 16h12M51 13v5" stroke="#1478d8" strokeWidth="3" />
        </svg>
      </Badge>
      <Watermark>PCB联盟网（Pcbbar.com）</Watermark>
    </Shell>
  );
}
